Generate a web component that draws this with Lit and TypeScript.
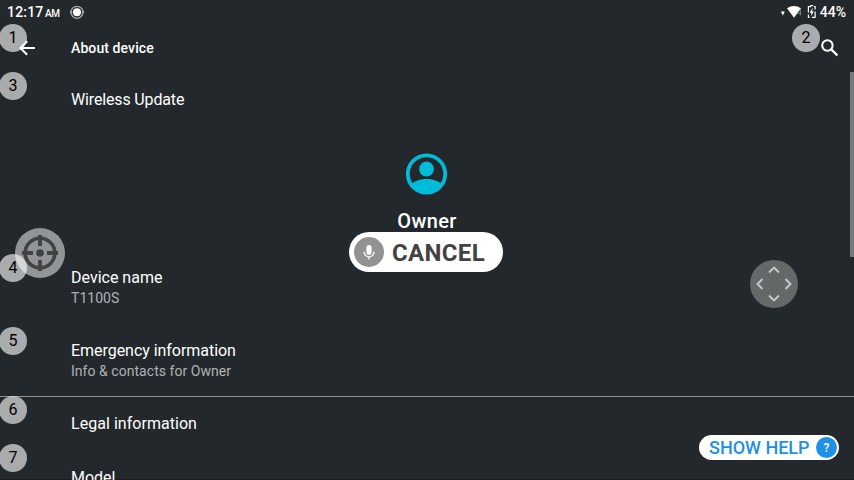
import { LitElement, html, css } from "lit";
import { customElement, property } from "lit/decorators.js";
import { styleMap } from "lit/directives/style-map.js";

interface Tag { n: number; x: number; y: number }

const TAGS: Tag[] = [
  { n: 1, x: 13, y: 38 },
  { n: 2, x: 806, y: 38 },
  { n: 3, x: 13, y: 86 },
  { n: 4, x: 13, y: 268 },
  { n: 5, x: 13, y: 341 },
  { n: 6, x: 13, y: 410 },
  { n: 7, x: 13, y: 458 },
];

@customElement("pref-row")
class PrefRow extends LitElement {
  @property() label = "";
  @property() summary = "";

  static styles = css`
    :host { display: block; box-sizing: border-box; height: 54px; padding: 17px 71px 0; flex: none; }
    :host([summary]) { height: 73px; padding-top: 14px; }
    .label { font-size: 16px; line-height: 20px; color: #fff; white-space: nowrap; }
    .summary { font-size: 14px; line-height: 20px; color: #b0b2b3; letter-spacing: 0.04px; white-space: nowrap; }
  `;

  render() {
    return html`<div class="label">${this.label}</div>
      ${this.summary ? html`<div class="summary">${this.summary}</div>` : null}`;
  }
}

@customElement("app-root")
class AppRoot extends LitElement {
  static styles = css`
    :host {
      display: block; position: relative; width: 854px; height: 480px; overflow: hidden;
      background: #23282c; color: #fff; font-family: Roboto, sans-serif;
    }
    .screen { display: flex; flex-direction: column; height: 480px; position: relative; }
    .status { display: flex; align-items: center; height: 24px; padding: 0 8px 0 7px; flex: none; font-weight: 500; font-size: 14px; }
    .time { letter-spacing: 0.2px; }
    .ampm { font-size: 10px; margin-left: 1.5px; padding-top: 3px; width: 23.5px; letter-spacing: -0.3px; }
    .grow { flex: 1; }
    .signals { display: block; margin-right: 3px; }
    .bar { display: flex; align-items: center; height: 48px; padding: 0 15px 0 17px; flex: none; }
    .title { font-size: 14px; font-weight: 500; letter-spacing: 0.1px; margin-left: 34px; flex: 1; }
    svg { display: block; }
    .list { display: flex; flex-direction: column; flex: 1; min-height: 0; overflow: hidden; }
    .first { height: 55px; padding-top: 18px; letter-spacing: -0.15px; }
    .profile { display: flex; flex-direction: column; align-items: center; height: 127px; padding-top: 26px; box-sizing: border-box; flex: none; }
    .owner { font-size: 20px; line-height: 24px; font-weight: 500; margin-top: 14px; letter-spacing: 0.35px; }
    .emergency { height: 69px; letter-spacing: -0.04px; }
    .legal { letter-spacing: 0.04px; }
    .rule { height: 1px; background: #919395; flex: none; }
    .navedge { position: absolute; left: 0; right: 0; bottom: 0; height: 1.5px; background: #1f1a20; }
    .thumb { position: absolute; right: 0; top: 72px; width: 4px; height: 185px; background: #777a7d; }
    .tag {
      position: absolute; width: 28px; height: 28px; margin: -14px 0 0 -14px; border-radius: 50%;
      background: rgba(255, 255, 255, 0.61); color: #000; font-size: 16px; line-height: 28px; text-align: center;
    }
    .target { position: absolute; left: 15px; top: 228px; }
    .pad { position: absolute; left: 750px; top: 260px; }
    .cancel {
      position: absolute; left: 349px; top: 232px; width: 154px; height: 40px; border-radius: 20px; box-sizing: border-box;
      background: #fff; color: #424242; display: flex; align-items: center; padding-left: 5px; gap: 8px;
      font-size: 24px; font-weight: 700; letter-spacing: 0.35px; white-space: nowrap;
    }
    .cancel span { padding-top: 2px; }
    .help {
      position: absolute; left: 699px; top: 435px; width: 140px; height: 25px; border-radius: 13px; box-sizing: border-box;
      background: #fff; color: #1e90e4; display: flex; align-items: center; padding: 0 2px 0 10px; justify-content: space-between;
      font-size: 18px; font-weight: 500; white-space: nowrap;
    }
    .q { width: 21px; height: 21px; border-radius: 50%; background: #1e90e8; color: #fff; font-size: 12px; line-height: 22px; text-align: center; }
  `;

  render() {
    return html`
      <div class="navedge"></div>
      <div class="screen">
        <div class="status">
          <span class="time">12:17</span><span class="ampm">AM</span>
          <svg width="16" height="16" viewBox="0 0 16 16">
            <circle cx="8" cy="8.3" r="6" fill="none" stroke="#a2a5a7" stroke-width="1.3"/>
            <path d="M.8 8.3h2.6M12.6 8.3h2.6" stroke="#a8abac" stroke-width="1.6"/>
            <circle cx="8" cy="8.3" r="4" fill="#fff"/>
          </svg>
          <span class="grow"></span>
          <svg class="signals" width="38" height="16" viewBox="0 0 38 16">
            <path d="M1.8 7.6h4L3.8 11.5z" fill="#fff"/>
            <path d="M8 4.2Q15 -.4 22 4.2L15 13.8z" fill="#fff"/>
            <path d="M21.4 11.5V5.6L18.4 9.4h4" stroke="#7b8286" stroke-width="1" fill="none"/>
            <path d="M32 2.6H29.4V8.6M29.4 10.4V13.4H30.6M33 13.4h3.1V7.4M36.1 5.6V2.6H35M31.2 1.6h3" fill="none" stroke="#fff" stroke-width="1.2"/>
            <path d="M33.8 3.8l-3.2 4.9h1.8L31.8 12.2l3.1-4.7h-1.8z" fill="#fff"/>
          </svg>
          <span>44%</span>
        </div>
        <div class="bar">
          <svg width="20" height="20" viewBox="0 0 20 20"><path d="M18 10H4M10.2 3.2L3.4 10l6.8 6.8" fill="none" stroke="#fff" stroke-width="2"/></svg>
          <span class="title">About device</span>
          <svg width="18" height="18" viewBox="0 0 18 18"><circle cx="6.4" cy="6.5" r="5.2" fill="none" stroke="#fff" stroke-width="2"/><path d="M10.3 10.4l6.1 6.1" stroke="#fff" stroke-width="2.4"/></svg>
        </div>
        <div class="list">
          <pref-row class="first" label="Wireless Update"></pref-row>
          <div class="profile">
            <svg width="42" height="42" viewBox="0 0 42 42">
              <defs><clipPath id="disc"><circle cx="20.5" cy="21" r="20"/></clipPath></defs>
              <circle cx="20.5" cy="21" r="18.7" fill="none" stroke="#00bcd8" stroke-width="3.8"/>
              <circle cx="20.5" cy="16" r="7.4" fill="#00bcd8"/>
              <path d="M5.5 31C12.5 24.3 28.5 24.3 35.5 31V42H5.5z" fill="#00bcd8" clip-path="url(#disc)"/>
            </svg>
            <div class="owner">Owner</div>
          </div>
          <pref-row label="Device name" summary="T1100S"></pref-row>
          <pref-row class="emergency" label="Emergency information" summary="Info &amp; contacts for Owner"></pref-row>
          <div class="rule"></div>
          <pref-row class="legal" label="Legal information"></pref-row>
          <pref-row label="Model"></pref-row>
        </div>
      </div>
      <div class="thumb"></div>
      <svg class="target" width="50" height="50" viewBox="0 0 50 50">
        <circle cx="25" cy="25" r="25" fill="#929597"/>
        <circle cx="25" cy="25" r="14.8" fill="none" stroke="#424242" stroke-width="3.6"/>
        <path d="M25 7v11M25 32v11M7 25h11M32 25h11" stroke="#424242" stroke-width="3.8"/>
        <circle cx="25" cy="25" r="3.8" fill="#424242"/>
      </svg>
      ${TAGS.map((t) => html`<div class="tag" style=${styleMap({ left: `${t.x}px`, top: `${t.y}px` })}>${t.n}</div>`)}
      <svg class="pad" width="48" height="48" viewBox="0 0 48 48">
        <circle cx="24" cy="24" r="24" fill="#656869"/>
        <path d="M19 12.5l5-5 5 5M19 35.5l5 5 5-5M12.5 19l-5 5 5 5M35.5 19l5 5-5 5" fill="none" stroke="#c8c9ca" stroke-width="1.9"/>
      </svg>
      <div class="cancel">
        <svg width="30" height="30" viewBox="0 0 30 30">
          <circle cx="15" cy="15" r="15" fill="#929292"/>
          <rect x="12.4" y="8" width="5.2" height="9.8" rx="2.6" fill="#fff"/>
          <path d="M10 14.8a5 5 0 0 0 10 0M15 19.8v2.6" fill="none" stroke="#fff" stroke-width="1.3"/>
        </svg>
        <span>CANCEL</span>
      </div>
      <div class="help"><span>SHOW HELP</span><span class="q">?</span></div>
    `;
  }
}
